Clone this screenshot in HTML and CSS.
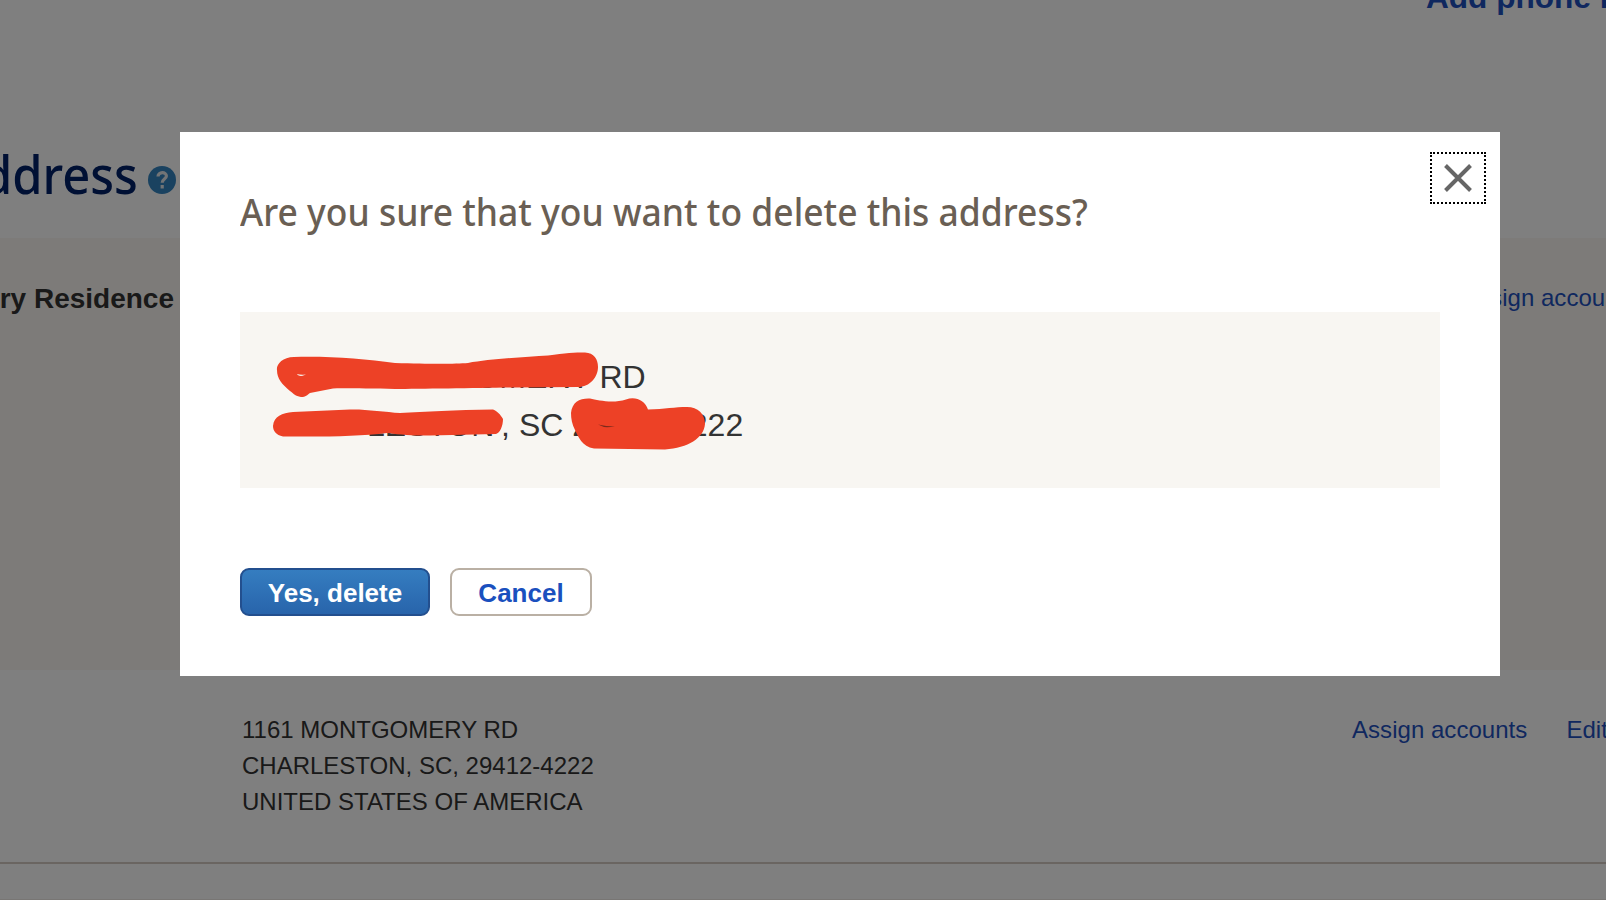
FILE: index.html
```html
<!DOCTYPE html>
<html lang="en">
<head>
<meta charset="utf-8">
<title>Delete address</title>
<link rel="stylesheet" href="styles.css">
</head>
<body>
<main class="page">
  <div class="phone-row"><a class="add-phone">Add phone n</a></div>
  <div class="title-row">
    <h1 class="title"><span>ddress</span></h1>
    <svg class="help" viewBox="0 0 28 28"><circle cx="14" cy="14" r="14"/><path d="M10 10.6c0-5 8.4-5.2 8.4-.6 0 3.2-4.2 3-4.2 6.8M14.2 19v3.4"/></svg>
  </div>
  <section class="primary">
    <h2 class="residence">ry Residence</h2>
    <a class="link assign-top">Assign accou</a>
  </section>
  <section class="other">
    <p class="address">1161 MONTGOMERY RD<br>CHARLESTON, SC, 29412-4222<br>UNITED STATES OF AMERICA</p>
    <nav class="links"><a class="link">Assign accounts</a><a class="link">Edit</a></nav>
  </section>
  <div class="tail"></div>
</main>
<div class="overlay">
  <div class="modal" role="dialog">
    <button class="close" aria-label="Close"><svg viewBox="0 0 28 28"><path d="M1.5 1.5l25 25M26.5 1.5l-25 25"/></svg></button>
    <h2 class="question"><span>Are you sure that you want to delete this address?</span></h2>
    <div class="card">
      <p class="card-line street">GOMERY RD</p>
      <p class="card-line town"><span class="city">LESTON</span><span class="comma">,</span><span>SC 29412-4222</span></p>
      <svg class="marks" viewBox="0 0 500 120">
        <path d="M37 30C36 25 42 17 54 17C90 16 125 19 155 23C190 24 215 24 228 23C250 19 285 17 308 15.500C325 13 335 12.500 345 12.500C354 13 358 19 358 27C358 37 350 47 338 47L275 47.500C240 48 180 49 155 49C130 49 105 48 93 48.500L70 53C67 55 66 57 61 57C55 56 54 54 50 51C42 44 37 39 37 30Z"/>
        <path d="M33 86C34 76 42 73 53 72L110 69.500C125 69 145 72 160 73C185 72 215 70 253 69.500C256 70 261 75 263 79C263 86 260 93 256 94L190 95.500C170 96 155 94 147 93C120 96 90 97 43 96.500C36 95 33 91 33 86Z"/>
        <path d="M331 73C332 62 340 58 350 58.500C358 60 372 64 386 59.500C395 56 405 60 408 69.500C425 69 435 67 447 67C458 67 465 74 465 84C464 98 448 108 425 109.500L354 108.500C342 107 338 96 335 90C332 84 331 79 331 73Z"/>
        <path class="gap" d="M57 34q4 1 9 .5l-4 1.500q-4 0-5-2z"/>
        <path class="gap dark" d="M358 84.500q8 2 17 2q-7 1-11 .500z"/>
      </svg>
    </div>
    <div class="actions"><button class="btn yes">Yes, delete</button><button class="btn cancel">Cancel</button></div>
  </div>
</div>
</body>
</html>
```
FILE: styles.css
```css
* { box-sizing: border-box; }
body { margin: 0; width: 1606px; height: 900px; overflow: hidden; background: #fff; font-family: "Liberation Sans", Arial, sans-serif; color: #333; }
h1, h2, p { margin: 0; }
button { font-family: inherit; padding: 0; background: none; }
.page { width: 1606px; height: 900px; overflow: hidden; display: flex; flex-direction: column; }
.phone-row { height: 132px; padding-left: 1426px; overflow: hidden; white-space: nowrap; }
.add-phone { display: block; margin-top: -21px; line-height: 36px; font-size: 31.6px; font-weight: 700; color: #1e50be; }
.title-row { height: 106px; display: flex; align-items: flex-start; }
.title { width: 138px; display: flex; justify-content: flex-end; font: 500 52px/60px "Noto Sans", sans-serif; color: #012169; margin-top: 12px; }
.title span { transform: scaleX(.94); transform-origin: right; }
.help { width: 28px; height: 28px; margin: 34px 0 0 10px; fill: #3484c0; }
.help path { fill: none; stroke: #e4e8ec; stroke-width: 3.2; }
.primary { height: 432px; background: #faf7f2; display: flex; justify-content: space-between; align-items: flex-start; }
.residence { width: 174px; display: flex; justify-content: flex-end; white-space: nowrap; font-size: 28px; line-height: 36px; margin-top: 43px; }
.link { color: #1e50be; font-size: 24px; line-height: 36px; white-space: nowrap; letter-spacing: .04px; }
.assign-top { width: 144px; margin-top: 42px; }
.other { height: 194px; padding: 42px 0 0 242px; display: flex; border-bottom: 2px solid #d4cac2; }
.address { flex: none; width: 1110px; font-size: 24px; line-height: 36px; }
.links { display: flex; gap: 39px; }
.tail { flex: 1; border-bottom: 1px solid #f0ece8; }
.overlay { position: absolute; inset: 0; background: rgba(0, 0, 0, .5); padding: 132px 0 0 180px; }
.modal { position: relative; width: 1320px; height: 544px; background: #fff; padding: 51px 60px 0; }
.close { position: absolute; right: 14px; top: 20px; width: 56px; height: 52px; border: 2px dotted #000; display: flex; align-items: center; justify-content: center; }
.close svg { width: 28px; height: 28px; fill: none; stroke: #666; stroke-width: 4; }
.question { height: 129px; font: 500 38px/56px "Noto Sans", sans-serif; color: #6a5f54; white-space: nowrap; }
.question span { display: inline-block; transform: scaleX(.933); transform-origin: left; }
.card { position: relative; height: 176px; background: #f8f6f2; padding: 41px 36px; }
.card-line { display: flex; font-size: 32px; line-height: 48px; white-space: pre; }
.street { padding-left: 173.5px; }
.town { padding-left: 91px; }
.city { width: 134px; }
.comma { width: 18px; }
.marks { position: absolute; left: 0; top: 28px; width: 500px; height: 120px; fill: #ed4126; }
.marks .gap { fill: #f8e4dc; }
.marks .dark { fill: #7a2a1c; }
.actions { display: flex; gap: 20px; margin-top: 80px; }
.btn { height: 48px; padding-top: 2px; border-radius: 9px; font-size: 26px; font-weight: 700; }
.yes { width: 190px; color: #fff; border: 2px solid #234f8e; background: linear-gradient(#357dc0, #2864ab); }
.cancel { width: 142px; color: #1a50be; border: 2px solid #bab0a4; background: #fff; }
```
